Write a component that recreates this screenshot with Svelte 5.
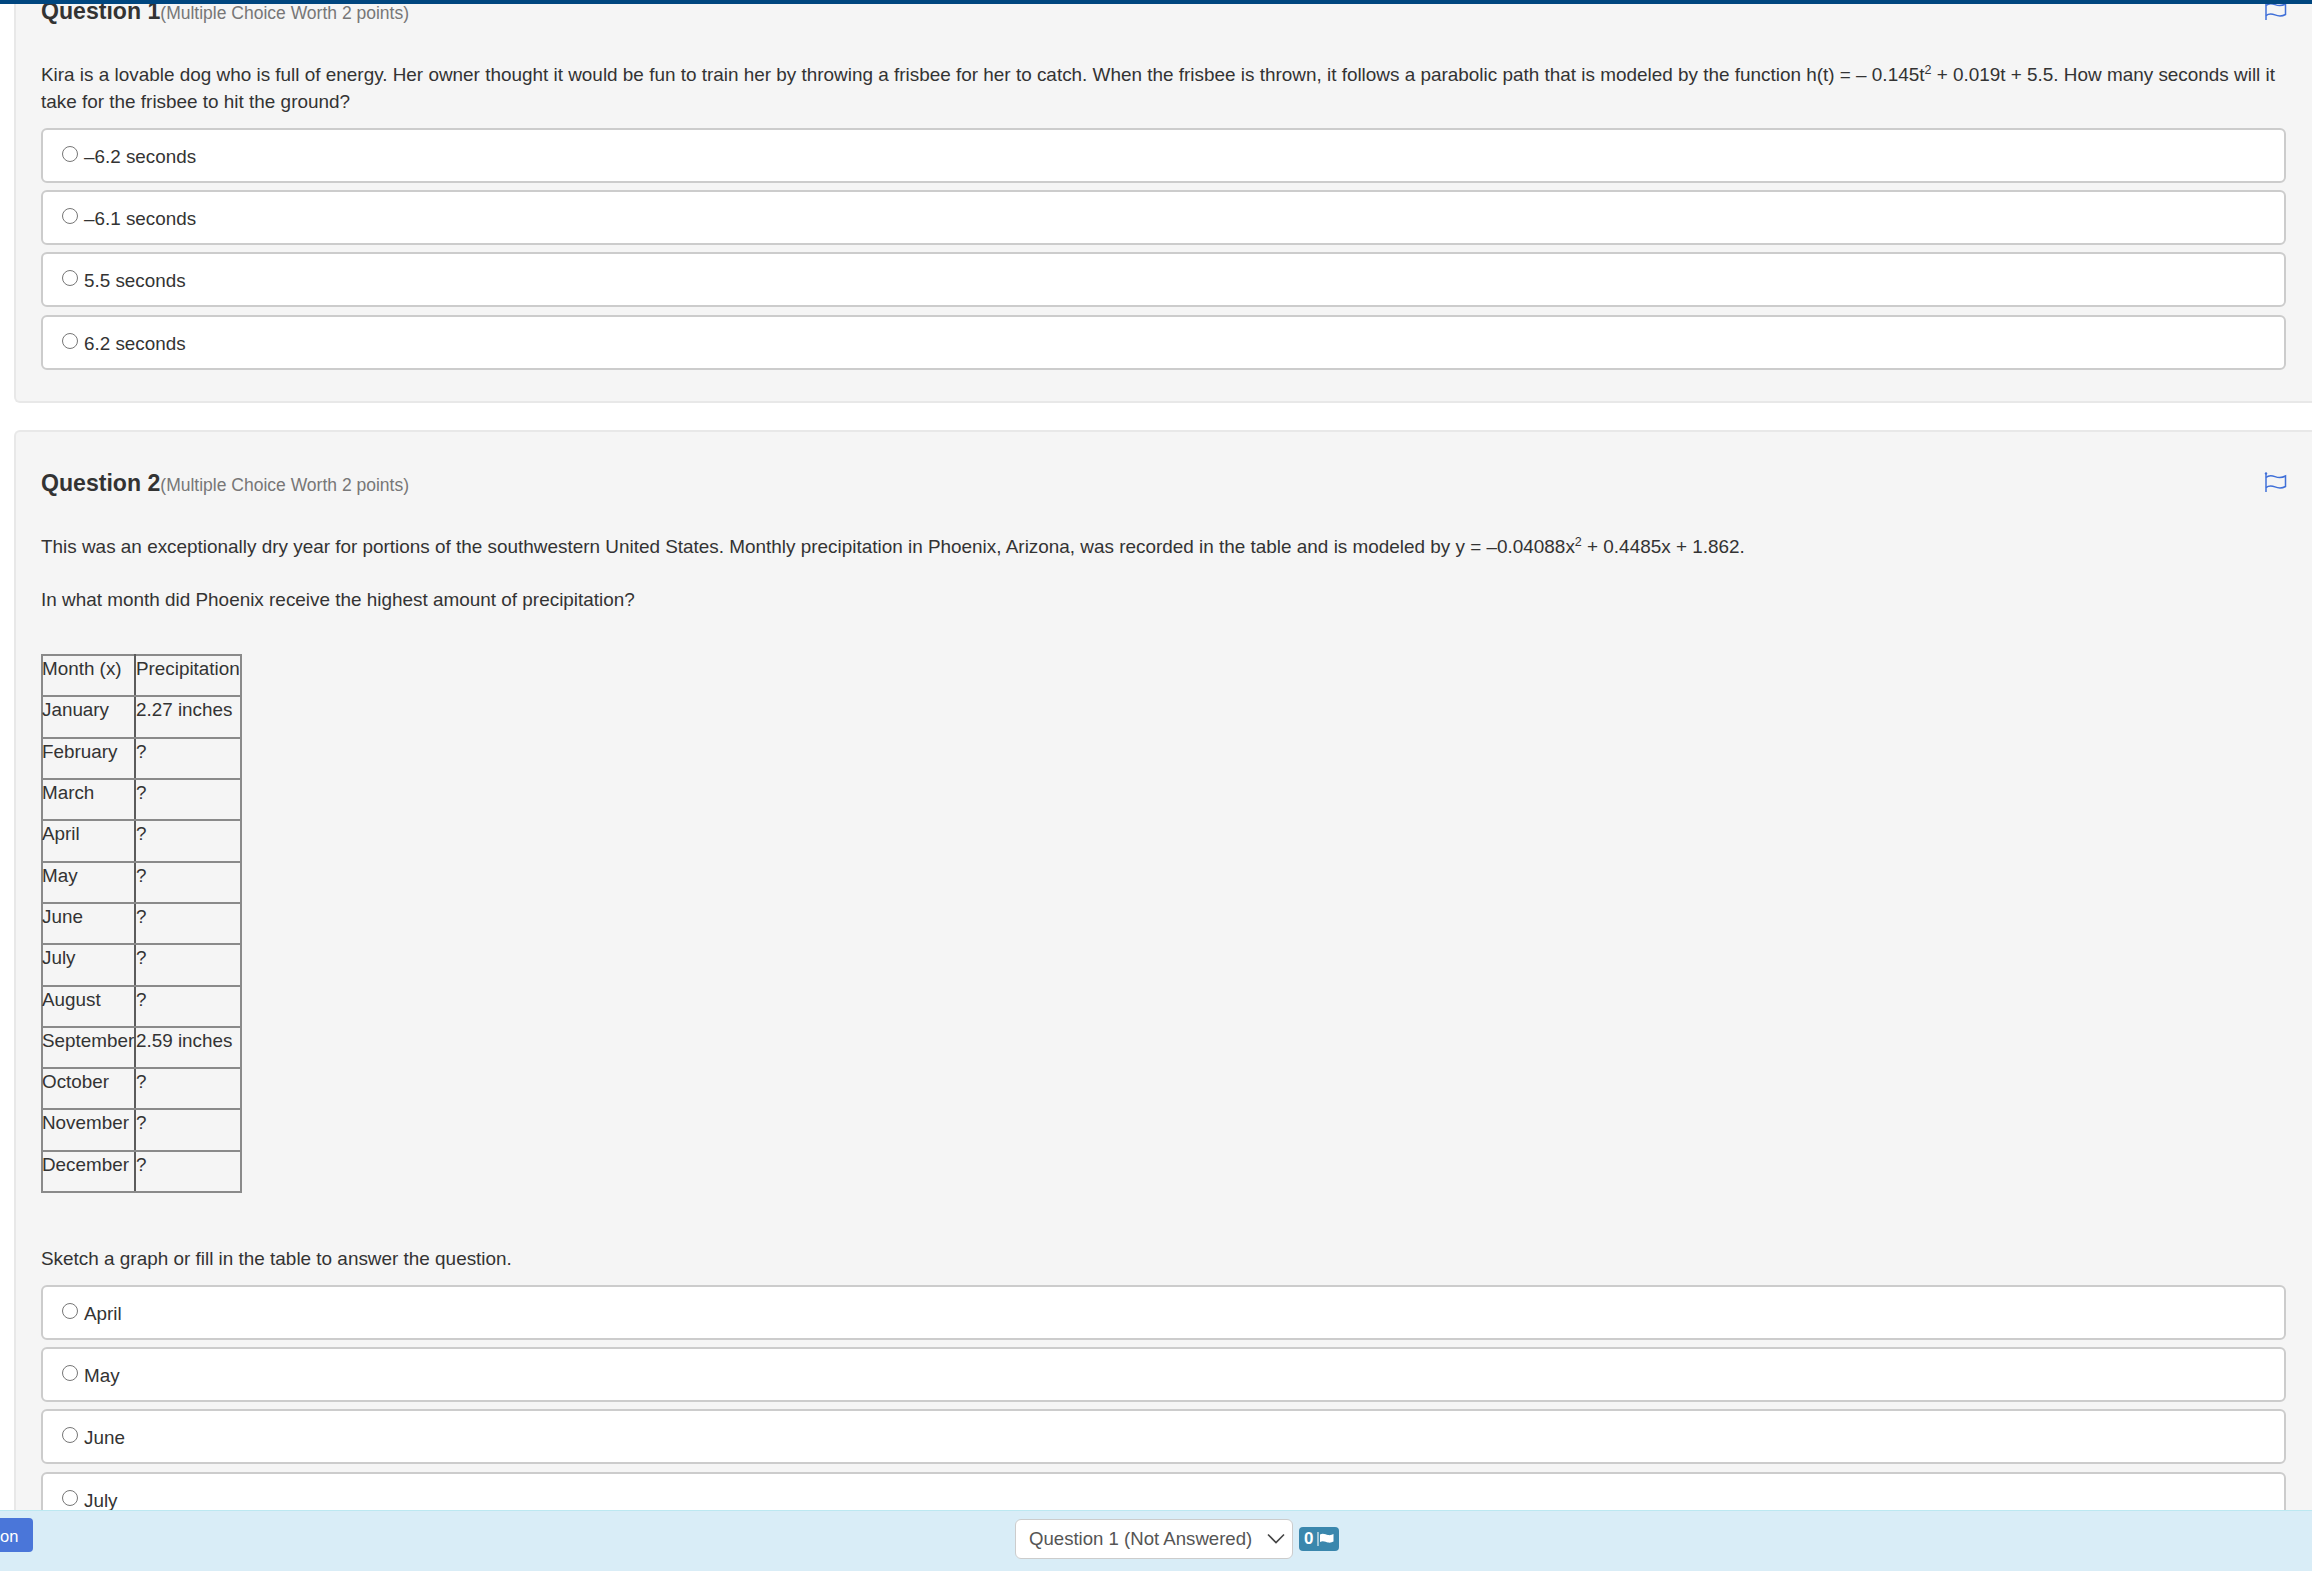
<script>
  const q1 = ['–6.2 seconds', '–6.1 seconds', '5.5 seconds', '6.2 seconds'];
  const q2 = ['April', 'May', 'June', 'July'];
  const months = ['January','February','March','April','May','June','July','August','September','October','November','December'];
  const vals = { January: '2.27 inches', September: '2.59 inches' };
</script>

{#snippet flag()}
  <svg class="flag" viewBox="0 0 22 20" width="23" height="20" aria-hidden="true">
    <path d="M1.5 1V20" stroke-width="1.5"/>
    <circle cx="1.5" cy="1.4" r="1.2" class="dot"/>
    <path d="M1.5 5.5C4 3.2 7 3.2 10.5 4.6C14 6 17.5 6 21 4V14.5C17.5 16.4 14 16.3 10.5 14.9C7 13.5 4 13.6 1.5 15.6" stroke-width="1.5"/>
  </svg>
{/snippet}

<div class="viewport">
  <div class="topbar"></div>
  <main class="scroll">
    <section class="card">
      <header class="qhead">
        <h2>Question 1</h2><small>(Multiple Choice Worth 2 points)</small>
        {@render flag()}
      </header>
      <p class="q1p">Kira is a lovable dog who is full of energy. Her owner thought it would be fun to train her by throwing a frisbee for her to catch. When the frisbee is thrown, it follows a parabolic path that is modeled by the function h(t) = – 0.145t<sup>2</sup> + 0.019t + 5.5. How many seconds will it take for the frisbee to hit the ground?</p>
      <div class="opts">
        {#each q1 as o}
          <label class="opt"><span class="radio"></span><span>{o}</span></label>
        {/each}
      </div>
    </section>

    <section class="card">
      <header class="qhead">
        <h2>Question 2</h2><small>(Multiple Choice Worth 2 points)</small>
        {@render flag()}
      </header>
      <p class="q2a">This was an exceptionally dry year for portions of the southwestern United States. Monthly precipitation in Phoenix, Arizona, was recorded in the table and is modeled by y = –0.04088x<sup>2</sup> + 0.4485x + 1.862.</p>
      <p class="q2b">In what month did Phoenix receive the highest amount of precipitation?</p>
      <table>
        <tbody>
          <tr><td>Month (x)</td><td>Precipitation</td></tr>
          {#each months as m}
            <tr><td>{m}</td><td>{vals[m] ?? '?'}</td></tr>
          {/each}
        </tbody>
      </table>
      <p class="q2c">Sketch a graph or fill in the table to answer the question.</p>
      <div class="opts">
        {#each q2 as o}
          <label class="opt"><span class="radio"></span><span>{o}</span></label>
        {/each}
      </div>
    </section>
  </main>

  <footer class="bar">
    <button class="btn">on</button>
    <div class="select"><span>Question 1 (Not Answered)</span>
      <svg width="18" height="11" viewBox="0 0 18 11" aria-hidden="true"><path d="M1 1.5L9 9.5L17 1.5" fill="none" stroke="#444" stroke-width="1.6"/></svg>
    </div>
    <span class="badge">0
      <svg width="17" height="14" viewBox="0 0 17 14" aria-hidden="true">
        <path d="M1 0V14" stroke="#fff" stroke-width="1.4" opacity=".75"/>
        <path d="M3 2.5C6 0.8 9 2.6 11 3C13 3.4 15 3 16.5 2V9.5C15 10.5 13 10.9 11 10.5C9 10.1 6 8.3 3 10Z" fill="#fff"/>
      </svg>
    </span>
  </footer>
</div>

<style>
  :global(body) { margin: 0; background: #fff; }
  .viewport {
    position: relative;
    width: 2312px;
    height: 1571px;
    overflow: hidden;
    font-family: "Liberation Sans", Arial, sans-serif;
    font-size: 18.85px;
    line-height: 27px;
    color: #333;
  }
  .topbar {
    position: absolute;
    top: 0; left: 0; right: 0;
    height: 4px;
    background: #00467f;
    z-index: 2;
  }
  .scroll {
    margin-top: -42px;
    padding-left: 14px;
    display: flex;
    flex-direction: column;
    gap: 27px;
  }
  .card {
    background: #f5f5f5;
    border: 2px solid #e8e8e8;
    border-right: 0;
    border-radius: 6px 0 0 6px;
    padding: 0 25px 31.5px;
  }
  .qhead {
    display: flex;
    align-items: baseline;
    height: 26px;
    margin-top: 38px;
    position: relative;
  }
  h2 {
    margin: 0;
    font-size: 23.1px;
    line-height: 26px;
    font-weight: 700;
  }
  small {
    font-size: 17.5px;
    line-height: 26px;
    color: #777;
  }
  .flag {
    position: absolute;
    right: 0;
    top: 1.5px;
    fill: none;
    stroke: #3f6fd8;
  }
  .dot { fill: #3f6fd8; stroke: none; }
  p { margin: 0; font-size: 18.92px; }
  sup { font-size: 12.5px; line-height: 0; vertical-align: baseline; position: relative; top: -7px; }
  .q1p { margin-top: 36.5px; width: 2245px; }
  .q2a { margin-top: 37px; }
  .q2b { margin-top: 26px; }
  .q2c { margin-top: 51.5px; }
  .opts {
    margin-top: 13px;
    display: flex;
    flex-direction: column;
    gap: 7.4px;
    width: 2245px;
  }
  .opt {
    display: flex;
    align-items: center;
    gap: 6px;
    height: 55px;
    box-sizing: border-box;
    background: #fff;
    border: 2px solid #ccc;
    border-radius: 6px;
    padding: 2px 19px 0;
  }
  .radio {
    width: 16px;
    height: 16px;
    box-sizing: border-box;
    border: 1.5px solid #767676;
    border-radius: 50%;
    background: #fff;
    margin-top: -5px;
  }
  table {
    margin-top: 41px;
    border-collapse: collapse;
    table-layout: fixed;
    width: 201px;
    line-height: 24px;
  }
  td {
    height: 41.3px;
    box-sizing: border-box;
    padding: 1px 0 12px;
    border: 2px solid #8a8a8a;
    vertical-align: top;
    white-space: nowrap;
    overflow: visible;
  }
  td:first-child { width: 93px; border-right: 2px solid #5c5c5c; text-indent: -1px; }
  tr:nth-child(2) td, tr:nth-child(6) td, tr:nth-child(9) td, tr:nth-child(12) td { border-top: 2px solid #5c5c5c; }
  .bar {
    position: absolute;
    left: 0; right: 0; bottom: 0;
    height: 61px;
    box-sizing: border-box;
    background: #d9edf7;
    border-top: 1px solid #bce8f1;
    display: flex;
    align-items: center;
    gap: 6px;
    padding: 0 0 5px 1015px;
    z-index: 3;
  }
  .btn {
    position: absolute;
    left: -4px;
    top: 7px;
    width: 37px;
    height: 34px;
    border: 0;
    border-radius: 4px;
    background: #4a76d9;
    color: #fff;
    font: 16.5px/36px "Liberation Sans", Arial, sans-serif;
    text-align: left;
    padding: 0 0 0 4px;
  }
  .select {
    width: 278px;
    height: 40px;
    box-sizing: border-box;
    background: #fff;
    border: 1px solid #ccc;
    border-radius: 6px;
    padding: 0 7px 0 13px;
    display: flex;
    align-items: center;
    justify-content: space-between;
    font-size: 18.6px;
    color: #555;
  }
  .badge {
    width: 40px;
    height: 24px;
    box-sizing: border-box;
    margin-top: 1px;
    background: #3a87ad;
    border-radius: 4px;
    color: #fff;
    font-size: 17px;
    font-weight: 700;
    line-height: 24px;
    padding-left: 5px;
    display: flex;
    align-items: center;
    gap: 4px;
  }
</style>
